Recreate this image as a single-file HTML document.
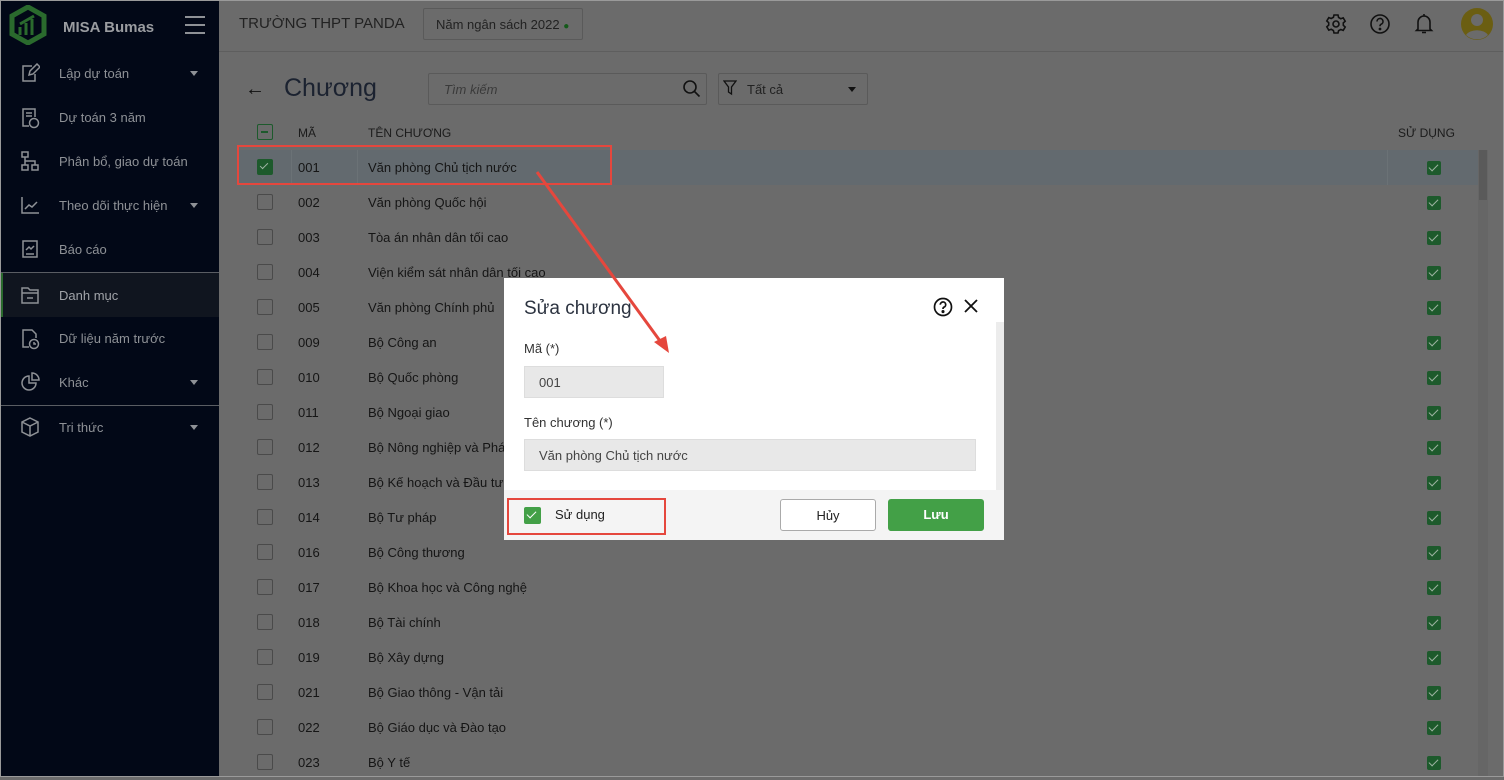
<!DOCTYPE html>
<html><head><meta charset="utf-8"><style>
*{box-sizing:border-box;margin:0;padding:0}
body{width:1504px;height:777px;overflow:hidden;background:#6b6b6b;font-family:"Liberation Sans",sans-serif;position:relative;color:#151515;font-size:13px}
.abs{position:absolute}
#side{left:0;top:0;width:219px;height:777px;background:#020817;color:#8e9196}
.mi{position:absolute;left:0;width:219px;height:44px;font-size:13px}
.mi span{position:absolute;left:59px;top:15px}
.mi svg{position:absolute;left:20px;top:12px}
.caret{position:absolute;left:190px;top:20px;border:4px solid transparent;border-top:5px solid #8e9196}
.row{position:absolute;left:237px;width:1241px;height:35px}
.cb{position:absolute;left:20px;top:9px;width:16px;height:16px;border:1.5px solid #4a4a4a;border-radius:2px}
.code{position:absolute;left:61px;top:10px}
.name{position:absolute;left:131px;top:10px}
.gk{position:absolute;left:1190px;top:11px;width:14px;height:14px;background:#1d5a2c;border-radius:2px}
.gk:after,.ck:after{content:"";position:absolute;left:4px;top:1px;width:4px;height:8px;border:solid #9db3a2;border-width:0 1.5px 1.5px 0;transform:rotate(45deg)}
</style></head><body>
<div class="abs" style="inset:0;border:1px solid #9a9a9a;z-index:20;pointer-events:none"></div>
<div id="side" class="abs">
 <svg class="abs" style="left:9px;top:5px" width="38" height="40" viewBox="0 0 38 40"><path d="M19 2 L35 11 V29 L19 38 L3 29 V11 Z" fill="none" stroke="#2a6a2d" stroke-width="5"/><path d="M11 30 V22 M17 30 V18 M23 30 V14 M11 19 L25 11" stroke="#2a6a2d" stroke-width="3"/></svg>
 <div class="abs" style="left:63px;top:19px;font-weight:bold;font-size:15px;color:#9a9ca0">MISA Bumas</div>
 <div class="abs" style="left:185px;top:16px;width:20px;height:2px;background:#8e9196;box-shadow:0 8px 0 #8e9196,0 16px 0 #8e9196"></div>
 <div class="mi" style="top:51px"><svg width="20" height="20" fill="none" stroke="#8e9196" stroke-width="1.5"><path d="M12 3H3v15h12v-7M9 12l1-4 7-7 3 3-7 7z"/></svg><span>Lập dự toán</span><i class="caret"></i></div>
 <div class="mi" style="top:95px"><svg width="20" height="22" fill="none" stroke="#8e9196" stroke-width="1.5"><path d="M9 19H3V2h12v8M6 6h6M6 9h6"/><circle cx="14" cy="16" r="4.5"/></svg><span>Dự toán 3 năm</span></div>
 <div class="mi" style="top:139px"><svg width="20" height="20" fill="none" stroke="#8e9196" stroke-width="1.5"><path d="M2 1h6v5H2zM2 14h6v5H2zM12 14h6v5h-6zM5 6v8M5 10h10v4"/></svg><span>Phân bổ, giao dự toán</span></div>
 <div class="mi" style="top:183px"><svg width="20" height="20" fill="none" stroke="#8e9196" stroke-width="1.5"><path d="M2 2v16h17M5 14l4-4 3 2 5-5"/></svg><span>Theo dõi thực hiện</span><i class="caret"></i></div>
 <div class="mi" style="top:227px"><svg width="20" height="20" fill="none" stroke="#8e9196" stroke-width="1.5"><path d="M3 2h14v16H3zM6 15h8M6 11l3-3 2 2 3-3"/></svg><span>Báo cáo</span></div>
 <div class="abs" style="left:0;top:272px;width:219px;height:1px;background:#5a5d63"></div>
 <div class="mi" style="top:273px;background:#10151f;border-left:3px solid #2a6a2d;height:44px"><svg width="20" height="20" fill="none" stroke="#8e9196" stroke-width="1.5" style="left:17px"><path d="M2 3h6l2 2h8v13H2zM2 8h16M7 13h6"/></svg><span style="left:56px;color:#a0a3a8">Danh mục</span></div>
 <div class="mi" style="top:316px"><svg width="20" height="22" fill="none" stroke="#8e9196" stroke-width="1.5"><path d="M9 19H3V2h9l4 4v4"/><circle cx="14" cy="16" r="4.5"/><path d="M14 14v2h2"/></svg><span>Dữ liệu năm trước</span></div>
 <div class="mi" style="top:360px"><svg width="20" height="20" fill="none" stroke="#8e9196" stroke-width="1.5"><path d="M9 4a7 7 0 1 0 7 7H9z"/><path d="M12 1a7 7 0 0 1 7 7h-7z"/></svg><span>Khác</span><i class="caret"></i></div>
 <div class="abs" style="left:0;top:405px;width:219px;height:1px;background:#5a5d63"></div>
 <div class="mi" style="top:405px"><svg width="20" height="20" fill="none" stroke="#8e9196" stroke-width="1.5"><path d="M10 1l8 4v10l-8 4-8-4V5zM2 5l8 4 8-4M10 9v10"/></svg><span>Tri thức</span><i class="caret"></i></div>
</div>
<!-- header -->
<div class="abs" style="left:219px;top:51px;width:1285px;height:1px;background:#5e5e5e"></div>
<div class="abs" style="left:239px;top:15px;font-size:15px;color:#222">TRƯỜNG THPT PANDA</div>
<div class="abs" style="left:423px;top:8px;width:160px;height:32px;border:1px solid #5a5a5a;border-radius:2px;font-size:13px;padding:8px 0 0 12px;color:#222">Năm ngân sách 2022 <span style="color:#145a1a;font-size:10px">●</span></div>
<svg class="abs" style="left:1325px;top:13px" width="22" height="22" fill="none" stroke="#111" stroke-width="1.6"><circle cx="11" cy="11" r="3"/><path d="M9 2h4l.6 2.5 2.2 1.2 2.4-.9 2 3.4-1.9 1.7v2.4l1.9 1.7-2 3.4-2.4-.9-2.2 1.2L13 20H9l-.6-2.5-2.2-1.2-2.4.9-2-3.4 1.9-1.7V9.7L1.8 8l2-3.4 2.4.9L8.4 4.3z"/></svg>
<svg class="abs" style="left:1369px;top:13px" width="22" height="22" fill="none" stroke="#111" stroke-width="1.6"><circle cx="11" cy="11" r="9"/><path d="M8 8.5a3 3 0 1 1 4 2.8c-.8.4-1 1-1 2"/><circle cx="11" cy="16" r=".6" fill="#111"/></svg>
<svg class="abs" style="left:1413px;top:12px" width="22" height="24" fill="none" stroke="#111" stroke-width="1.6"><path d="M5 17V10a6 6 0 0 1 12 0v7l1.5 1.5h-15zM9 20.5h4M11 2v2"/></svg>
<svg class="abs" style="left:1460px;top:7px" width="34" height="34"><circle cx="17" cy="17" r="16" fill="#6b5e12"/><circle cx="17" cy="13" r="6" fill="#6b6b6b"/><path d="M6 28a12 8 0 0 1 22 0a16 16 0 0 1-22 0z" fill="#6b6b6b"/></svg>
<!-- title bar -->
<div class="abs" style="left:245px;top:78px;font-size:20px;color:#111">←</div>
<div class="abs" style="left:284px;top:74px;font-size:25px;color:#1b2230">Chương</div>
<div class="abs" style="left:428px;top:73px;width:279px;height:32px;border:1px solid #5a5a5a;border-radius:2px"></div>
<div class="abs" style="left:444px;top:82px;font-style:italic;color:#3a3a3a">Tìm kiếm</div>
<svg class="abs" style="left:682px;top:79px" width="20" height="20" fill="none" stroke="#111" stroke-width="1.6"><circle cx="8" cy="8" r="6"/><path d="M12.5 12.5l5 5"/></svg>
<div class="abs" style="left:718px;top:73px;width:150px;height:32px;border:1px solid #5a5a5a;border-radius:2px"></div>
<svg class="abs" style="left:723px;top:80px" width="14" height="16" fill="none" stroke="#111" stroke-width="1.3"><path d="M1 1h12L8.5 7v7l-3-2V7z"/></svg>
<div class="abs" style="left:747px;top:82px;color:#222">Tất cả</div>
<div class="abs" style="left:848px;top:87px;border:4px solid transparent;border-top:5px solid #111"></div>
<!-- table header -->
<div class="abs" style="left:257px;top:124px;width:16px;height:16px;border:1.5px solid #1d5a2c;border-radius:2px"><div style="position:absolute;left:3px;top:6px;width:7px;height:1.5px;background:#1d5a2c"></div></div>
<div class="abs" style="left:298px;top:126px;font-size:12px;color:#1b1b1b">MÃ</div>
<div class="abs" style="left:368px;top:126px;font-size:12px;color:#1b1b1b">TÊN CHƯƠNG</div>
<div class="abs" style="left:1398px;top:126px;font-size:12px;color:#1b1b1b">SỬ DỤNG</div>
<div class="abs" style="left:237px;top:150px;width:1241px;height:1px;background:#5e5e5e"></div>
<div class="abs" style="left:1478px;top:150px;width:10px;height:627px;background:#666"></div>
<div class="abs" style="left:1479px;top:150px;width:8px;height:50px;background:#5a5a5a"></div>
<div class="row" style="top:150px;background:#636a6f"><div class="cb" style="background:#1d5a2c;border-color:#1d5a2c"><div style="position:absolute;left:4px;top:1px;width:4px;height:8px;border:solid #9db3a2;border-width:0 1.5px 1.5px 0;transform:rotate(45deg)"></div></div><span class="code">001</span><span class="name">Văn phòng Chủ tịch nước</span><i class="gk"></i>
<div style="position:absolute;left:54px;top:0;width:1px;height:35px;background:#6b7276"></div><div style="position:absolute;left:120px;top:0;width:1px;height:35px;background:#6b7276"></div><div style="position:absolute;left:1150px;top:0;width:1px;height:35px;background:#6b7276"></div></div>
<div class="row" style="top:185px"><i class="cb"></i><span class="code">002</span><span class="name">Văn phòng Quốc hội</span><i class="gk"></i></div>
<div class="row" style="top:220px"><i class="cb"></i><span class="code">003</span><span class="name">Tòa án nhân dân tối cao</span><i class="gk"></i></div>
<div class="row" style="top:255px"><i class="cb"></i><span class="code">004</span><span class="name">Viện kiểm sát nhân dân tối cao</span><i class="gk"></i></div>
<div class="row" style="top:290px"><i class="cb"></i><span class="code">005</span><span class="name">Văn phòng Chính phủ</span><i class="gk"></i></div>
<div class="row" style="top:325px"><i class="cb"></i><span class="code">009</span><span class="name">Bộ Công an</span><i class="gk"></i></div>
<div class="row" style="top:360px"><i class="cb"></i><span class="code">010</span><span class="name">Bộ Quốc phòng</span><i class="gk"></i></div>
<div class="row" style="top:395px"><i class="cb"></i><span class="code">011</span><span class="name">Bộ Ngoại giao</span><i class="gk"></i></div>
<div class="row" style="top:430px"><i class="cb"></i><span class="code">012</span><span class="name">Bộ Nông nghiệp và Phát triển nông thôn</span><i class="gk"></i></div>
<div class="row" style="top:465px"><i class="cb"></i><span class="code">013</span><span class="name">Bộ Kế hoạch và Đầu tư</span><i class="gk"></i></div>
<div class="row" style="top:500px"><i class="cb"></i><span class="code">014</span><span class="name">Bộ Tư pháp</span><i class="gk"></i></div>
<div class="row" style="top:535px"><i class="cb"></i><span class="code">016</span><span class="name">Bộ Công thương</span><i class="gk"></i></div>
<div class="row" style="top:570px"><i class="cb"></i><span class="code">017</span><span class="name">Bộ Khoa học và Công nghệ</span><i class="gk"></i></div>
<div class="row" style="top:605px"><i class="cb"></i><span class="code">018</span><span class="name">Bộ Tài chính</span><i class="gk"></i></div>
<div class="row" style="top:640px"><i class="cb"></i><span class="code">019</span><span class="name">Bộ Xây dựng</span><i class="gk"></i></div>
<div class="row" style="top:675px"><i class="cb"></i><span class="code">021</span><span class="name">Bộ Giao thông - Vận tải</span><i class="gk"></i></div>
<div class="row" style="top:710px"><i class="cb"></i><span class="code">022</span><span class="name">Bộ Giáo dục và Đào tạo</span><i class="gk"></i></div>
<div class="row" style="top:745px"><i class="cb"></i><span class="code">023</span><span class="name">Bộ Y tế</span><i class="gk"></i></div>
<!-- red box row -->
<div class="abs" style="left:237px;top:145px;width:375px;height:40px;border:2px solid #e5473d"></div>
<!-- dialog -->
<div class="abs" style="left:504px;top:278px;width:500px;height:262px;background:#fff;z-index:5">
 <div class="abs" style="left:20px;top:20px;font-size:19px;color:#2c3340">Sửa chương</div>
 <svg class="abs" style="left:429px;top:19px" width="20" height="20" fill="none" stroke="#111" stroke-width="1.7"><circle cx="10" cy="10" r="8.5"/><path d="M7.3 7.7a2.7 2.7 0 1 1 3.6 2.5c-.7.3-.9.8-.9 1.8"/><circle cx="10" cy="14.6" r=".7" fill="#111"/></svg>
 <svg class="abs" style="left:459px;top:20px" width="16" height="16" stroke="#111" stroke-width="1.8"><path d="M2 2l12 12M14 2L2 14"/></svg>
 <div class="abs" style="left:492px;top:44px;width:8px;height:168px;background:#ececec"></div>
 <div class="abs" style="left:20px;top:63px;color:#333">Mã (*)</div>
 <div class="abs" style="left:20px;top:88px;width:140px;height:32px;background:#e8e8e8;border:1px solid #ddd;padding:8px 0 0 14px;color:#444">001</div>
 <div class="abs" style="left:20px;top:137px;color:#333">Tên chương (*)</div>
 <div class="abs" style="left:20px;top:161px;width:452px;height:32px;background:#e8e8e8;border:1px solid #ddd;padding:8px 0 0 14px;color:#444">Văn phòng Chủ tịch nước</div>
 <div class="abs" style="left:0;top:212px;width:500px;height:50px;background:#f4f4f4">
  <div class="abs" style="left:20px;top:17px;width:17px;height:17px;background:#43a047;border-radius:2px"><div style="position:absolute;left:5px;top:2px;width:5px;height:9px;border:solid #fff;border-width:0 1.5px 1.5px 0;transform:rotate(45deg)"></div></div>
  <div class="abs" style="left:51px;top:17px;color:#222">Sử dụng</div>
  <div class="abs" style="left:276px;top:9px;width:96px;height:32px;background:#fff;border:1px solid #aaa;border-radius:3px;text-align:center;padding-top:8px;color:#222">Hủy</div>
  <div class="abs" style="left:384px;top:9px;width:96px;height:32px;background:#43a047;border-radius:3px;text-align:center;padding-top:8px;color:#fff;font-weight:bold">Lưu</div>
 </div>
</div>
<div class="abs" style="left:507px;top:498px;width:159px;height:37px;border:2px solid #e5473d;z-index:6"></div>
<svg class="abs" style="left:0;top:0;z-index:7" width="1504" height="777"><path d="M537 172 L663 345" stroke="#e5473d" stroke-width="3"/><path d="M669 353 L654 342 L666 336 Z" fill="#e5473d"/></svg>
</body></html>
